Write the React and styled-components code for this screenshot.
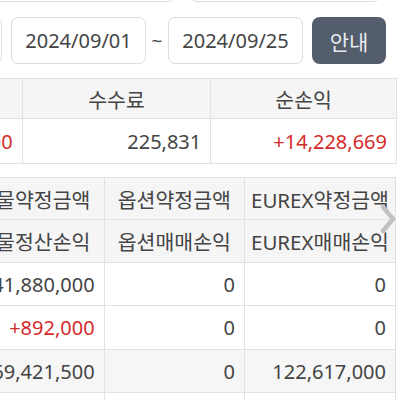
import React from "react";
import styled, { createGlobalStyle } from "styled-components";

const GlobalStyle = createGlobalStyle`
  html, body {
    margin: 0;
    padding: 0;
    background: #fff;
  }
  body {
    font-family: "Noto Sans", "Noto Sans CJK KR", sans-serif;
    color: #444;
  }
`;

const summaryCols = [
  { title: "매매손익", value: "+14,454,500", red: true, width: 189 },
  { title: "수수료", value: "225,831", width: 189 },
  { title: "순손익", value: "+14,228,669", red: true, width: 186 },
];

const detailCols = [
  { width: 141, heads: ["선물약정금액", "선물정산손익"] },
  { width: 141, heads: ["옵션약정금액", "옵션매매손익"] },
  { width: 150, heads: ["EUREX약정금액", "EUREX매매손익"] },
];

const detailRows = [
  { cells: [{ v: "41,880,000" }, { v: "0" }, { v: "0" }] },
  { cells: [{ v: "+892,000", red: true }, { v: "0" }, { v: "0" }] },
  { total: true, cells: [{ v: "169,421,500" }, { v: "0" }, { v: "122,617,000" }] },
  { cells: [{ v: "" }, { v: "" }, { v: "" }] },
];

export default function App() {
  return (
    <Page>
      <GlobalStyle />
      {/* FILTERS */}
      <Filters>
        <SelectRow>
          <SelectBox $width={253} />
          <SelectBox $width={190} />
        </SelectRow>
        <DateRow>
          <PeriodBox />
          <DateInput>2024/09/01</DateInput>
          <Tilde>~</Tilde>
          <DateInput>2024/09/25</DateInput>
          <GuideButton>안내</GuideButton>
        </DateRow>
      </Filters>

      {/* SUMMARY TABLE */}
      <ScrollBox $width={397}>
        <Table $shift={-167}>
          <colgroup>
            {summaryCols.map((c, i) => (
              <col key={i} style={{ width: c.width }} />
            ))}
          </colgroup>
          <tbody>
            <tr>
              {summaryCols.map((c, i) => (
                <HeadCell key={i} $h={40}>
                  {c.title}
                </HeadCell>
              ))}
            </tr>
            <tr>
              {summaryCols.map((c, i) => (
                <Cell key={i} $h={45} $red={c.red}>
                  {c.value}
                </Cell>
              ))}
            </tr>
          </tbody>
        </Table>
      </ScrollBox>

      {/* DETAIL TABLE */}
      <ScrollBox $width={396} $gap={13}>
        <Table $shift={-37}>
          <colgroup>
            {detailCols.map((c, i) => (
              <col key={i} style={{ width: c.width }} />
            ))}
          </colgroup>
          <tbody>
            {[0, 1].map((r) => (
              <tr key={r}>
                {detailCols.map((c, i) => (
                  <HeadCell key={i} $h={r === 0 ? 42 : 43}>
                    {c.heads[r]}
                  </HeadCell>
                ))}
              </tr>
            ))}
            {detailRows.map((row, r) => (
              <tr key={r}>
                {row.cells.map((cell, i) => (
                  <Cell key={i} $h={r === 1 ? 44 : 43} $red={cell.red} $total={row.total}>
                    {cell.v}
                  </Cell>
                ))}
              </tr>
            ))}
          </tbody>
        </Table>
        <ScrollHint viewBox="0 0 16 30" aria-hidden="true">
          <path d="M3 3 L13 15 L3 27" />
        </ScrollHint>
      </ScrollBox>
    </Page>
  );
}

// PAGE
const Page = styled.div`
  width: 400px;
  height: 400px;
  overflow: hidden;
  position: relative;
`;

// FILTERS
const Filters = styled.div`
  margin: -45px 0 0 -78px;
  display: flex;
  flex-direction: column;
  gap: 15px;
`;

const SelectRow = styled.div`
  display: flex;
  gap: 15px;
`;

const SelectBox = styled.div`
  width: ${(p) => p.$width}px;
  height: 47px;
  box-sizing: border-box;
  border: 1px solid #dcdcdc;
  border-radius: 7px;
  flex-shrink: 0;
`;

const DateRow = styled.div`
  display: flex;
  align-items: center;
  gap: 9px;
  height: 47px;
`;

const PeriodBox = styled.div`
  width: 80px;
  height: 47px;
  box-sizing: border-box;
  border: 1px solid #dcdcdc;
  border-radius: 7px;
  flex-shrink: 0;
`;

const DateInput = styled.div`
  width: 135px;
  height: 47px;
  box-sizing: border-box;
  border: 1px solid #dcdcdc;
  border-radius: 7px;
  display: flex;
  align-items: center;
  justify-content: center;
  font-size: 20px;
  color: #444;
  flex-shrink: 0;
`;

const Tilde = styled.span`
  width: 4px;
  text-align: center;
  font-size: 19px;
  color: #555;
  display: flex;
  justify-content: center;
`;

const GuideButton = styled.div`
  width: 74px;
  height: 47px;
  border-radius: 8px;
  background: #535d6c;
  color: #e8eaee;
  font-size: 21px;
  display: flex;
  align-items: center;
  justify-content: center;
  flex-shrink: 0;
`;

// TABLES
const ScrollBox = styled.div`
  position: relative;
  width: ${(p) => p.$width}px;
  overflow: hidden;
  margin-top: ${(p) => p.$gap || 14}px;
`;

const Table = styled.table`
  border-collapse: collapse;
  table-layout: fixed;
  margin-left: ${(p) => p.$shift}px;
  font-size: 20px;
`;

const HeadCell = styled.td`
  height: ${(p) => p.$h}px;
  padding: 0 6px;
  box-sizing: border-box;
  border: 1px solid #e2e2e2;
  background: #f5f5f5;
  text-align: center;
  white-space: nowrap;
  color: #444;
  font-size: 20.5px;
  vertical-align: middle;
`;

const Cell = styled.td`
  height: ${(p) => p.$h}px;
  padding: 0 9px 0 8px;
  box-sizing: border-box;
  border: 1px solid #e2e2e2;
  background: ${(p) => (p.$total ? "#f6f6f6" : "#fff")};
  text-align: right;
  white-space: nowrap;
  color: ${(p) => (p.$red ? "#d52b2b" : "#444")};
  vertical-align: middle;
`;

const ScrollHint = styled.svg`
  position: absolute;
  right: 0;
  top: 27px;
  width: 16px;
  height: 30px;
  fill: none;
  stroke: #c2c2c2;
  stroke-width: 4.5;
  stroke-linecap: round;
  stroke-linejoin: round;
`;
